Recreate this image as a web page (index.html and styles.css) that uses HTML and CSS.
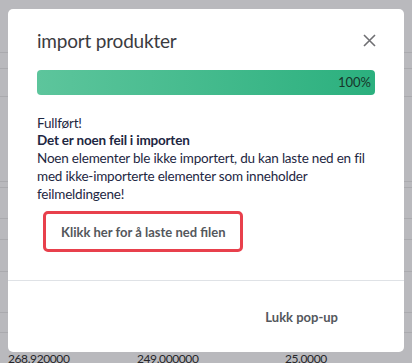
FILE: index.html
```html
<!DOCTYPE html>
<html lang="no">
<head>
    <meta charset="UTF-8">
    <meta name="viewport" content="width=device-width, initial-scale=1.0">
    <title>import produkter</title>
    <link rel="stylesheet" href="styles.css">
</head>
<body>
    <div class="page">
        <div class="row" style="height: 53px"></div>
        <div class="row" style="height: 16px"></div>
        <div class="row" style="height: 28px"></div>
        <div class="row" style="height: 85px"></div>
        <div class="row" style="height: 6px"></div>
        <div class="row" style="height: 31px"></div>
        <div class="row" style="height: 21px"></div>
        <div class="row" style="height: 32px"></div>
        <div class="row" style="height: 41px"></div>
        <div class="row" style="height: 20px"></div>
        <div class="row numbers">
            <span class="cell c1">268.920000</span>
            <span class="cell c2">249.000000</span>
            <span class="cell c3">25.0000</span>
        </div>
    </div>

    <div class="modal">
        <div class="modal-header">
            <h3>import produkter</h3>
            <button class="close-btn" aria-label="Lukk">
                <svg width="13" height="13" viewBox="0 0 13 13">
                    <path d="M1 1 L12 12 M12 1 L1 12" stroke="#6f6f73" stroke-width="1.6" fill="none"/>
                </svg>
            </button>
        </div>

        <div class="modal-body">
            <div class="progress">
                <div class="progress-bar">100%</div>
            </div>

            <div class="status">
                <div class="done">Fullført!</div>
                <div class="error-title">Det er noen feil i importen</div>
                <div>Noen elementer ble ikke importert, du kan laste ned en fil med ikke-importerte elementer som inneholder feilmeldingene!</div>
            </div>

            <button class="download-btn">Klikk her for å laste ned filen</button>
        </div>

        <div class="modal-footer">
            <button class="link-btn">Lukk pop-up</button>
        </div>
    </div>
</body>
</html>
```

FILE: styles.css
```css
body {
    margin: 0;
    font-family: 'Lato', 'Noto Sans', sans-serif;
    background-color: #b9b9bd;
    color: #1e2742;
    height: 363px;
    overflow: hidden;
}

.page {
    position: relative;
}

.row {
    border-bottom: 1px solid #aaaaae;
    box-sizing: border-box;
}

.numbers {
    border-bottom: none;
    height: 30px;
    position: relative;
    font-size: 12px;
    letter-spacing: -0.4px;
    color: #26262a;
}

.cell {
    position: absolute;
    top: 18px;
}

.c1 { left: 8px; }
.c2 { left: 137px; }
.c3 { left: 285px; }

.modal {
    position: absolute;
    top: 9px;
    left: 8px;
    width: 396px;
    height: 343px;
    background: #fff;
    border-radius: 5px;
    display: flex;
    flex-direction: column;
}

.modal-header {
    display: flex;
    align-items: center;
    justify-content: space-between;
    padding: 20px 28px 17px 29px;
}

.modal-header h3 {
    margin: 0;
    font-size: 19px;
    letter-spacing: -0.2px;
    font-weight: 400;
    line-height: 24px;
    color: #3b3b3f;
}

.close-btn {
    border: none;
    background: none;
    padding: 0;
    width: 13px;
    height: 13px;
    margin-top: -2px;
    cursor: pointer;
    display: flex;
}

.modal-body {
    padding: 0 29px;
    flex-grow: 1;
    border-bottom: 1px solid #dfe2e6;
}

.progress {
    height: 25px;
    border-radius: 4px;
    overflow: hidden;
    background: #e9ecef;
}

.progress-bar {
    height: 100%;
    background: linear-gradient(to right, #5dc59c, #2bb07e);
    text-align: right;
    font-size: 13px;
    line-height: 25px;
    padding-right: 4px;
    color: #17352a;
}

.status {
    margin-top: 21px;
    margin-right: -6px;
    font-size: 13.5px;
    letter-spacing: -0.2px;
    line-height: 18px;
}

.done {
    line-height: 15px;
}

.error-title {
    font-weight: 700;
}

.download-btn {
    margin: 8px 0 0 6px;
    width: 200px;
    height: 41px;
    border: 3px solid #e8404c;
    border-radius: 5px;
    background: #fff;
    font-family: inherit;
    font-size: 13px;
    font-weight: 700;
    color: #54575c;
    text-align: left;
    padding: 0 0 0 15px;
    cursor: pointer;
}

.modal-footer {
    height: 71px;
    display: flex;
    align-items: center;
    justify-content: flex-end;
    padding-right: 66px;
}

.link-btn {
    border: none;
    background: none;
    padding: 0;
    font-family: inherit;
    font-size: 13px;
    font-weight: 700;
    color: #54575c;
    cursor: pointer;
}
```
